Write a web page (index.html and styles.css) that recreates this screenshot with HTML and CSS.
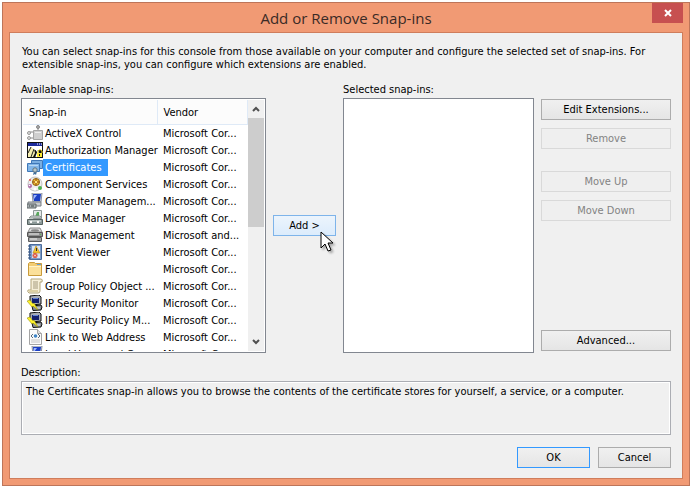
FILE: index.html
```html
<!DOCTYPE html>
<html lang="en">
<head>
    <meta charset="UTF-8">
    <title>Add or Remove Snap-ins</title>
    <link rel="stylesheet" href="styles.css">
</head>
<body>
    <!-- shared icons -->
    <svg class="sprites" aria-hidden="true">
        <symbol id="computer" viewBox="0 0 16 16">
            <path d="M5 0h10l-1 9H6z" fill="#d5d9e2" stroke="#8a90a0"/>
            <path d="M6 1h8l-1 7H7z" fill="#1c3fc4"/>
            <path d="M7 2h3l-3 4z" fill="#9fb8ff"/>
            <path d="M1 9h13v4H1z" fill="#c9ccd0" stroke="#777c80"/>
            <path d="M0 11h9v4H0z" fill="#a9b0b2" stroke="#5f6769"/>
            <path d="M2 13h1M4 13h3" stroke="#3f4749"/>
        </symbol>
        <symbol id="ipsec" viewBox="0 0 16 16">
            <path d="M3 1l9-1 2 2v7l-9 1-2-2z" fill="#a9adb5" stroke="#111"/>
            <path d="M5 3h7v5H5z" fill="#14206e"/>
            <path d="M6 3h5v1H6z" fill="#5f83d8"/>
            <path d="M5 11l9-1 1 2-1 3-8 .5z" fill="#8b9098" stroke="#111"/>
            <path d="M9 13h4" stroke="#eee"/>
            <path d="M0 6l3-1 3 4 1-1 4 7-5-4-1 1z" fill="#fff32c" stroke="#8a8400" stroke-width=".5"/>
        </symbol>
    </svg>

    <main class="window">
        <header class="titlebar">
            <h1 class="title">Add or Remove Snap-ins</h1>
            <button class="close-btn" type="button" aria-label="Close">
                <svg width="8" height="8" viewBox="0 0 8 8"><path d="M1 1l6 6M7 1l-6 6" stroke="#fff" stroke-width="2"/></svg>
            </button>
        </header>

        <div class="client">
            <p class="intro">You can select snap-ins for this console from those available on your computer and configure the selected set of snap-ins. For extensible snap-ins, you can configure which extensions are enabled.</p>

            <div class="picker">
                <section class="column">
                    <h2 class="label" id="available-label">Available snap-ins:</h2>
                    <div class="list available">
                        <div class="viewport">
                            <table class="snapins" aria-labelledby="available-label">
                                <thead>
                                    <tr><th class="name-col">Snap-in</th><th>Vendor</th></tr>
                                </thead>
                                <tbody>
                                    <tr>
                                        <td><div class="item"><svg class="icon" viewBox="0 0 16 16"><path d="M11 0v5M3 7h4M3 13h4" stroke="#888"/><circle cx="11" cy="2" r="1.500" fill="#aaa" stroke="#888"/><circle cx="2" cy="8" r="1.500" fill="#ddd" stroke="#999"/><circle cx="2" cy="13" r="1.500" fill="#ddd" stroke="#999"/><path d="M6.500 5.500h9v9h-9z" fill="#cfcfcf" stroke="#a5a5a5"/><path d="M8 7h6v1H8z" fill="#eee"/></svg><span>ActiveX Control</span></div></td>
                                        <td>Microsoft Cor...</td>
                                    </tr>
                                    <tr>
                                        <td><div class="item"><svg class="icon" viewBox="0 0 16 16"><path d="M0 0h16v16H0z" fill="#111"/><path d="M1 1h14v3H1z" fill="#1c2a9a"/><path d="M10 2h1M12 2h1M14 2h1" stroke="#fff"/><path d="M1 4h14v4H1z" fill="#fff"/><path d="M1 8l3-3 3 2 1 4-2 4H1z" fill="#f5edb0"/><path d="M4 5l-3 6M7 7l-3 8" stroke="#222"/><path d="M8 6l3 4-2 5" fill="none" stroke="#fff" stroke-width="1.500"/><path d="M11 11V9q2-3 4 0v2" fill="none" stroke="#e8d420"/><path d="M10 11h5v4h-5z" fill="#ffe933"/><path d="M12 12h1v2h-1z" fill="#111"/></svg><span>Authorization Manager</span></div></td>
                                        <td>Microsoft Cor...</td>
                                    </tr>
                                    <tr class="selected">
                                        <td><div class="item"><svg class="icon" viewBox="0 0 16 16"><path d="M4.500 1.500h11v8h-11z" fill="#7aaee0" stroke="#3f78b8"/><path d="M.500 4.500h12v8H.500z" fill="#82b6e8" stroke="#3f78b8"/><path d="M2 6h9v1H2z" fill="#b7d8f5"/><path d="M7 12l-1 4 2-1 1 1 1-4z" fill="#3d6e9e"/><circle cx="8" cy="11" r="2.200" fill="#b9c6ca" stroke="#5c7480"/></svg><span>Certificates</span></div></td>
                                        <td>Microsoft Cor...</td>
                                    </tr>
                                    <tr>
                                        <td><div class="item"><svg class="icon" viewBox="0 0 16 16"><circle cx="8" cy="8" r="7" fill="#ededed" stroke="#c2c2c2"/><circle cx="9" cy="6" r="3.500" fill="#f2c232" stroke="#8a5a10"/><path d="M9 3v6M6 6h6" stroke="#8a3c1c"/><path d="M8 5h2v2H8z" fill="#ffe680"/><circle cx="3" cy="10" r="2" fill="#b06aa8"/><circle cx="2.500" cy="9.500" r=".8" fill="#fff"/><circle cx="13" cy="12" r="2" fill="#4caf50"/><circle cx="3" cy="4" r="1" fill="#e05548"/><circle cx="8" cy="13" r="1.500" fill="#fff"/></svg><span>Component Services</span></div></td>
                                        <td>Microsoft Cor...</td>
                                    </tr>
                                    <tr>
                                        <td><div class="item"><svg class="icon"><use href="#computer"/></svg><span>Computer Managem...</span></div></td>
                                        <td>Microsoft Cor...</td>
                                    </tr>
                                    <tr>
                                        <td><div class="item"><svg class="icon" viewBox="0 0 16 16"><path d="M6.500.500h8v8h-8z" fill="#e4e9e8" stroke="#8e9998"/><path d="M10 2h2v5H8z" fill="#58a85c"/><path d="M2 8l2-2h9l2 2z" fill="#d5dbda" stroke="#87908f"/><path d="M.500 9.500h15v5H.500z" fill="#8b9897" stroke="#566261"/><path d="M2 11h12" stroke="#dfe6e5"/><path d="M3 11h2v2H3zM10 11h2v2h-2z" fill="#f7f7f7"/></svg><span>Device Manager</span></div></td>
                                        <td>Microsoft Cor...</td>
                                    </tr>
                                    <tr>
                                        <td><div class="item"><svg class="icon" viewBox="0 0 16 16"><path d="M3 1h10l2 4H1z" fill="#dcdcdc" stroke="#8b8b8b"/><ellipse cx="8" cy="3.500" rx="4" ry="1.200" fill="#888"/><path d="M.500 5.500h15v4H.500z" fill="#8f8f8f" stroke="#555"/><path d="M2 7h10" stroke="#ececec"/><path d="M1.500 10.500h13v4h-13z" fill="#a6a6a6" stroke="#5c5c5c"/><path d="M3 12h7" stroke="#eee"/><path d="M13 7h1v1h-1z" fill="#50c050"/></svg><span>Disk Management</span></div></td>
                                        <td>Microsoft and...</td>
                                    </tr>
                                    <tr>
                                        <td><div class="item"><svg class="icon" viewBox="0 0 16 16"><path d="M2.500.500h12v15h-12z" fill="#7d9dc9" stroke="#4b6c9c"/><path d="M5 2h8v12H5z" fill="#d8e4f4"/><path d="M1 2h3M1 5h3M1 8h3M1 11h3M1 14h3" stroke="#33507c"/><path d="M9 2l4 7H6z" fill="#f4c430" stroke="#b88a10" stroke-width=".6"/><path d="M9 4h1v3H9z" fill="#333"/><circle cx="8" cy="11.500" r="2.500" fill="#d9523e"/><path d="M7 10.500l2 2M9 10.500l-2 2" stroke="#fff" stroke-width=".8"/></svg><span>Event Viewer</span></div></td>
                                        <td>Microsoft Cor...</td>
                                    </tr>
                                    <tr>
                                        <td><div class="item"><svg class="icon" viewBox="0 0 16 16"><path d="M1.500 2.500l1-1h5l1 1h6v12h-13z" fill="#f3cd74" stroke="#c99b3b"/><path d="M10 3h4v1h-4z" fill="#5f9be0"/><path d="M2 5h12v9H2z" fill="#fbe09a"/><path d="M2 5h12v1H2z" fill="#fff2c8"/></svg><span>Folder</span></div></td>
                                        <td>Microsoft Cor...</td>
                                    </tr>
                                    <tr>
                                        <td><div class="item"><svg class="icon" viewBox="0 0 16 16"><path d="M4 1h10q2 0 1 3h-2v9q0 2-2 2H2q-2-1-1-3h3z" fill="#f6efd8" stroke="#b3a67c"/><path d="M6 4h5M6 6h5M6 8h5M6 10h5" stroke="#a59b7e"/><path d="M2 12h9v2H2z" fill="#ddd0a4"/></svg><span>Group Policy Object ...</span></div></td>
                                        <td>Microsoft Cor...</td>
                                    </tr>
                                    <tr>
                                        <td><div class="item"><svg class="icon"><use href="#ipsec"/></svg><span>IP Security Monitor</span></div></td>
                                        <td>Microsoft Cor...</td>
                                    </tr>
                                    <tr>
                                        <td><div class="item"><svg class="icon"><use href="#ipsec"/></svg><span>IP Security Policy M...</span></div></td>
                                        <td>Microsoft Cor...</td>
                                    </tr>
                                    <tr>
                                        <td><div class="item"><svg class="icon" viewBox="0 0 16 16"><path d="M2.500.500h8l4 4v11h-12z" fill="#fafafa" stroke="#a4a4a4"/><path d="M10.500.500v4h4" fill="#ddd" stroke="#a4a4a4"/><path d="M6 5L4 7l2 2M11 5l2 2-2 2" fill="none" stroke="#55687c"/><circle cx="8.500" cy="7" r="1.800" fill="#3d84c6"/><path d="M4 11h9M4 13h9" stroke="#c4c4c4"/></svg><span>Link to Web Address</span></div></td>
                                        <td>Microsoft Cor...</td>
                                    </tr>
                                    <tr>
                                        <td><div class="item"><svg class="icon"><use href="#computer"/></svg><span>Local Users and G...</span></div></td>
                                        <td>Microsoft Cor...</td>
                                    </tr>
                                </tbody>
                            </table>
                        </div>
                        <div class="scrollbar" aria-hidden="true">
                            <svg class="arrow" viewBox="0 0 8 6"><path d="M1 5l3-3 3 3" fill="none" stroke="#505050" stroke-width="2"/></svg>
                            <div class="track"><div class="thumb"></div></div>
                            <svg class="arrow" viewBox="0 0 8 6"><path d="M1 1l3 3 3-3" fill="none" stroke="#505050" stroke-width="2"/></svg>
                        </div>
                    </div>
                </section>

                <div class="add-cell">
                    <button class="btn hot" type="button">Add &gt;</button>
                    <svg class="cursor" width="14" height="22" viewBox="0 0 14 22" aria-hidden="true">
                        <path d="M1 1v16l4-4 3 7 3-1-3-7h5z" fill="#fff" stroke="#000"/>
                    </svg>
                </div>

                <section class="column">
                    <h2 class="label" id="selected-label">Selected snap-ins:</h2>
                    <div class="list" role="listbox" aria-labelledby="selected-label"></div>
                </section>

                <div class="actions">
                    <button class="btn" type="button">Edit Extensions...</button>
                    <button class="btn" type="button" disabled>Remove</button>
                    <button class="btn move-up" type="button" disabled>Move Up</button>
                    <button class="btn" type="button" disabled>Move Down</button>
                    <button class="btn advanced" type="button">Advanced...</button>
                </div>
            </div>

            <label class="label" for="description">Description:</label>
            <textarea class="description" id="description" readonly>The Certificates snap-in allows you to browse the contents of the certificate stores for yourself, a service, or a computer.</textarea>

            <footer class="footer">
                <button class="btn default" type="button">OK</button>
                <button class="btn" type="button">Cancel</button>
            </footer>
        </div>
    </main>
</body>
</html>
```
FILE: styles.css
```css
* { box-sizing: border-box; margin: 0; padding: 0; }
body {
    min-height: 100vh;
    padding: 2px;
    display: flex;
    background: #fff;
    color: #000;
    font-family: "DejaVu Sans Condensed", "DejaVu Sans", sans-serif;
    font-size: 11px;
    line-height: 13px;
}
button, textarea { font: inherit; color: inherit; }
.sprites { position: absolute; width: 0; height: 0; }

.window {
    flex: 1;
    display: flex;
    flex-direction: column;
    padding: 0 6px 6px;
    background: #f19a74;
    border: 1px solid #bd755a;
}

/* Title bar */
.titlebar {
    position: relative;
    height: 29px;
    display: flex;
    justify-content: center;
    align-items: center;
}
.title {
    font-family: "Open Sans", sans-serif;
    font-size: 15px;
    line-height: 20px;
    font-weight: 400;
    color: #3a2a26;
}
.close-btn {
    position: absolute;
    top: 0;
    right: 0;
    width: 31px;
    height: 20px;
    display: flex;
    justify-content: center;
    align-items: center;
    border: 0;
    background: #c75050;
}

.client {
    flex: 1;
    display: flex;
    flex-direction: column;
    padding: 12px 11px 10px;
    background: #f0f0f0;
    border: 1px solid #cf7d5c;
}
.intro { margin: 0 20px 12px 1px; }
.label { display: block; font-size: 11px; font-weight: 400; }

/* Lists and buttons */
.picker {
    flex: 1;
    display: grid;
    grid-template-columns: 245fr 63px 191fr 130px;
    column-gap: 7px;
    margin-bottom: 13px;
}
.column { display: flex; flex-direction: column; gap: 2px; min-width: 0; }
.list {
    flex: 1;
    background: #fff;
    border: 1px solid #828790;
}
.available { display: flex; padding: 1px; }
.viewport { flex: 1 1 0; height: 251px; min-width: 0; overflow: hidden; }

.snapins { width: 100%; table-layout: fixed; border-collapse: collapse; }
.snapins th {
    height: 24px;
    padding: 1px 6px 0;
    text-align: left;
    font-weight: 400;
    background: #fcfcfc;
    border-right: 1px solid #dfeaf7;
    border-bottom: 1px solid #dfeaf7;
}
.snapins .name-col { width: 134px; }
.snapins td {
    height: 17px;
    padding: 0 0 0 6px;
    white-space: nowrap;
}
.snapins td:first-child { padding-left: 4px; }
.item { display: flex; align-items: center; }
.item span { padding: 2px; }
.icon { flex: none; width: 16px; height: 16px; }
.selected .item span { padding-right: 6px; background: #3399ff; color: #fff; }

.scrollbar {
    width: 16px;
    display: flex;
    flex-direction: column;
    align-items: center;
    background: #f0f0f0;
}
.arrow { width: 8px; height: 6px; margin: 6px 0; }
.track { flex: 1; width: 100%; }
.thumb { height: 109px; background: #cdcdcd; }

.btn {
    height: 21px;
    background: linear-gradient(#f0f0f0, #e5e5e5);
    border: 1px solid #acacac;
}
.btn:disabled { background: #efefef; border-color: #d9d9d9; color: #838383; }
.btn.hot { width: 100%; background: linear-gradient(#ecf4fc, #dcecfc); border-color: #7eb4ea; }
.btn.default { border-color: #3399ff; }

.add-cell { position: relative; align-self: center; margin-top: 14px; }
.cursor { position: absolute; top: 16px; left: 47px; filter: drop-shadow(2px 2px 1px rgba(0, 0, 0, 0.3)); }

.actions { display: flex; flex-direction: column; gap: 8px; padding: 16px 0 2px; }
.move-up { margin-top: 14px; }
.advanced { margin-top: auto; }

.description {
    width: 100%;
    height: 54px;
    margin-top: 2px;
    padding: 3px 4px;
    resize: none;
    background: #f0f0f0;
    border: 1px solid #abadb3;
    box-shadow: inset 0 0 0 1px #fff;
}

.footer { display: flex; justify-content: flex-end; gap: 8px; padding-top: 12px; }
.footer .btn { width: 73px; }
```
